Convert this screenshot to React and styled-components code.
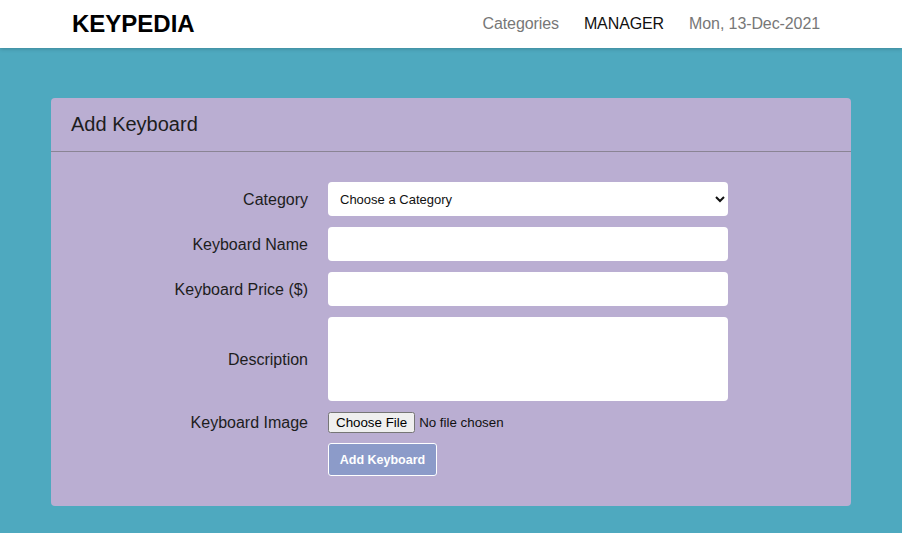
// Import Libraries
import React from 'react'
import styled, { createGlobalStyle } from 'styled-components'


// Style
const GlobalStyle = createGlobalStyle`
    * {
        box-sizing: border-box;
    }
    body {
        margin: 0;
        font-family: "Liberation Sans", Arial, sans-serif;
        background: #4ea9bf;
    }
`

const Page = styled.div`
    min-height: 533px;
    background: #4ea9bf;
`

const Navbar = styled.nav`
    height: 48px;
    background: #ffffff;
    box-shadow: 0 1px 4px rgba(0, 0, 0, 0.2);
`

const NavContainer = styled.div`
    width: 760px;
    height: 100%;
    margin: 0 auto;
    padding: 0 11px 0 1px;
    display: flex;
    align-items: center;
    justify-content: space-between;
`

const Brand = styled.a`
    font-size: 24px;
    font-weight: 700;
    color: #000000;
    text-decoration: none;
    margin-top: -1px;
`

const NavLinks = styled.div`
    display: flex;
    align-items: center;
    gap: 25px;
    margin-top: -1px;
`

const NavLink = styled.a`
    font-size: 16px;
    letter-spacing: -0.1px;
    color: ${(props) => (props.$active ? '#111111' : '#777777')};
    text-decoration: none;
`

const Main = styled.main`
    padding-top: 50px;
`

const Card = styled.div`
    width: 800px;
    margin: 0 auto;
    background: #baaed2;
    border-radius: 4px;
`

const CardHeader = styled.div`
    height: 54px;
    padding: 0 20px;
    display: flex;
    align-items: center;
    border-bottom: 1px solid #8a8494;
`

const CardTitle = styled.h2`
    margin: 0;
    font-size: 20px;
    font-weight: 400;
    color: #1d1d1d;
`

const Form = styled.form`
    display: grid;
    grid-template-columns: 257px 400px;
    column-gap: 20px;
    row-gap: 11px;
    align-items: center;
    padding: 30px 0 30px;
`

const Label = styled.label`
    font-size: 16px;
    color: #1d1d1d;
    text-align: right;
    padding-top: 1px;
`

const Select = styled.select`
    width: 400px;
    height: 34px;
    border: none;
    border-radius: 4px;
    background: #ffffff;
    padding: 0 6px 0 8px;
    font-family: "Liberation Sans", Arial, sans-serif;
    font-size: 13px;
    color: #111111;
`

const TextInput = styled.input`
    width: 400px;
    height: 34px;
    border: none;
    border-radius: 4px;
    background: #ffffff;
    padding: 0 12px;
    font-size: 13px;
`

const TextArea = styled.textarea`
    width: 400px;
    height: 84px;
    border: none;
    border-radius: 4px;
    background: #ffffff;
    padding: 8px 12px;
    resize: none;
    display: block;
    font-size: 13px;
`

const FileInput = styled.input`
    font-family: "Liberation Sans", Arial, sans-serif;
    font-size: 13.33px;
    color: #111111;
`

const Spacer = styled.div``

const SubmitButton = styled.button`
    display: block;
    width: 109px;
    height: 33px;
    margin-top: -1px;
    border: 1px solid #ffffff;
    border-radius: 3px;
    background: #8c9bc9;
    color: #ffffff;
    font-family: "Liberation Sans", Arial, sans-serif;
    font-size: 12.5px;
    font-weight: 700;
    cursor: pointer;
`

// Component
export default function App() {
    return (
        <Page>
            <GlobalStyle />
            <Navbar>
                <NavContainer>
                    <Brand href="#">KEYPEDIA</Brand>
                    <NavLinks>
                        <NavLink href="#">Categories</NavLink>
                        <NavLink href="#" $active>MANAGER</NavLink>
                        <NavLink as="span">Mon, 13-Dec-2021</NavLink>
                    </NavLinks>
                </NavContainer>
            </Navbar>
            <Main>
                <Card>
                    <CardHeader>
                        <CardTitle>Add Keyboard</CardTitle>
                    </CardHeader>
                    <Form onSubmit={(e) => e.preventDefault()}>
                        <Label htmlFor="category">Category</Label>
                        <Select id="category" defaultValue="">
                            <option value="">Choose a Category</option>
                        </Select>

                        <Label htmlFor="name">Keyboard Name</Label>
                        <TextInput id="name" type="text" />

                        <Label htmlFor="price">Keyboard Price ($)</Label>
                        <TextInput id="price" type="text" />

                        <Label htmlFor="description">Description</Label>
                        <TextArea id="description" />

                        <Label htmlFor="image">Keyboard Image</Label>
                        <FileInput id="image" type="file" />

                        <Spacer />
                        <div>
                            <SubmitButton type="submit">Add Keyboard</SubmitButton>
                        </div>
                    </Form>
                </Card>
            </Main>
        </Page>
    )
}
